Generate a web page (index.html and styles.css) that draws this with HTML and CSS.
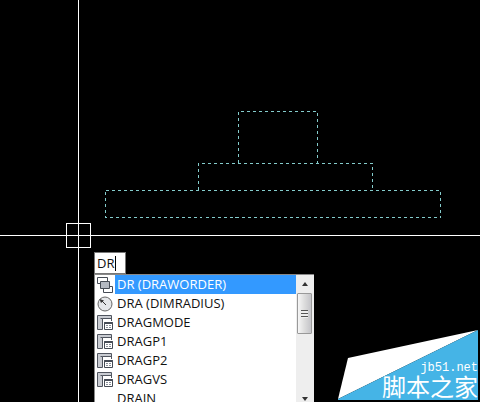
FILE: index.html
```html
<!DOCTYPE html>
<html lang="en">
<head>
<meta charset="utf-8">
<title>Drawing canvas</title>
<link rel="stylesheet" href="styles.css">
</head>
<body>
<main class="canvas">
  <svg class="drawing" aria-hidden="true">
    <g class="outline">
      <path d="M238.500 163V111.500H317.500V163"/>
      <path d="M198.500 190V163.500H372.500V190"/>
      <path d="M105.500 190.500H440.500V217.500H105.500Z"/>
    </g>
    <g class="crosshair">
      <line x1="78.500" y1="0" x2="78.500" y2="100%"/>
      <line x1="0" y1="235.500" x2="100%" y2="235.500"/>
      <rect x="66.500" y="223.500" width="24" height="24"/>
    </g>
  </svg>

  <svg class="symbols" aria-hidden="true">
    <symbol id="order" viewBox="0 0 16 16">
      <path class="sheet" d="M.5 .5h10v6h-10zM6.500 9.500h9v6h-9z"/>
      <path class="front" d="M3.500 4.500h9v7h-9z"/>
    </symbol>
    <symbol id="radius" viewBox="0 0 16 16">
      <circle class="dial" cx="8" cy="8" r="7"/>
      <path class="needle" d="M9 9L4 4"/>
      <path class="tip" d="M2.500 3l4.500 1.500-3 2.500z"/>
    </symbol>
    <symbol id="variable" viewBox="0 0 16 16">
      <path class="shade" d="M1 1h13v3H5v11H1z"/>
      <path class="frame" d="M14.500 6V.5H.5v14h5v-11h9M3.500 3.500h2"/>
      <path class="sheet" d="M7.500 7.500h8v7h-8z"/>
      <path class="front" d="M7.500 7.500h8v1h-8z"/>
      <path class="lines" d="M9 10.500h2M12 10.500h2M9 12.500h2M12 12.500h2"/>
    </symbol>
  </svg>

  <section class="prompt">
    <input class="command" type="text" value="DR" aria-label="Command" spellcheck="false">
    <span class="caret"></span>
    <div class="suggestions">
      <div class="options" role="listbox" aria-label="Commands">
        <button class="option selected" role="option" aria-selected="true"><svg class="icon"><use href="#order"/></svg><span class="name">DR (DRAWORDER)</span></button>
        <button class="option" role="option"><svg class="icon"><use href="#radius"/></svg><span class="name">DRA (DIMRADIUS)</span></button>
        <button class="option" role="option"><svg class="icon"><use href="#variable"/></svg><span class="name">DRAGMODE</span></button>
        <button class="option" role="option"><svg class="icon"><use href="#variable"/></svg><span class="name">DRAGP1</span></button>
        <button class="option" role="option"><svg class="icon"><use href="#variable"/></svg><span class="name">DRAGP2</span></button>
        <button class="option" role="option"><svg class="icon"><use href="#variable"/></svg><span class="name">DRAGVS</span></button>
        <button class="option" role="option"><span class="icon"></span><span class="name">DRAIN</span></button>
      </div>
      <div class="scrollbar">
        <button class="arrow" aria-label="Scroll up"><svg class="chevron" viewBox="0 0 6 4"><path d="M0 4L3 0l3 4z"/></svg></button>
        <div class="thumb"><span class="grip"></span></div>
        <button class="arrow end" aria-label="Scroll down"><svg class="chevron" viewBox="0 0 6 4"><path d="M0 0h6L3 4z"/></svg></button>
      </div>
    </div>
  </section>

  <aside class="watermark">
    <svg class="banner" viewBox="0 0 141 70" aria-hidden="true">
      <path class="paper" d="M10 28L140 0 0 69z"/>
      <path class="wave" d="M140 0v70H0v-1z"/>
    </svg>
    <span class="site">jb51.net</span>
    <span class="title" lang="zh">脚本之家</span>
  </aside>
</main>
</body>
</html>
```
FILE: styles.css
```css
* { box-sizing: border-box; }

body {
  margin: 0;
  background: #000;
  font-family: "Open Sans", "Noto Sans", sans-serif;
  font-size: 13px;
}

button {
  padding: 0;
  border: 0;
  background: none;
  font: inherit;
}

.canvas {
  position: relative;
  height: 100vh;
  overflow: hidden;
}

.drawing {
  position: absolute;
  width: 100%;
  height: 100%;
  fill: none;
  shape-rendering: crispEdges;
}

.outline {
  stroke: #84cccc;
  stroke-dasharray: 3 3;
}

.crosshair { stroke: #fff; }

.symbols {
  position: absolute;
  width: 0;
  height: 0;
}

.prompt {
  position: absolute;
  top: 252px;
  bottom: 0;
  left: 94px;
  display: flex;
  flex-direction: column;
  width: 220px;
}

.command {
  width: 32px;
  height: 22px;
  padding: 0 2px;
  border: 1px solid #777;
  border-radius: 0;
  outline: 0;
  background: #fff;
  color: #111;
  font: inherit;
}

.caret {
  position: absolute;
  top: 4px;
  left: 21px;
  width: 1px;
  height: 15px;
  background: #000;
}

.suggestions {
  display: flex;
  flex: 1;
  min-height: 0;
  border-top: 1px solid #888;
  border-left: 1px solid #888;
  background: #fff;
}

.options {
  flex: 1;
  overflow: hidden;
}

.option {
  display: flex;
  align-items: center;
  width: 100%;
  height: 19px;
  color: #111;
  text-align: left;
}

.icon {
  flex: none;
  width: 16px;
  height: 16px;
  margin: 0 2px;
}

.name {
  flex: 1;
  padding-left: 2px;
  line-height: 19px;
}

.selected .name {
  background: #3399ff;
  color: #fff;
}

.sheet { fill: #fff; stroke: #454b55; }
.front { fill: #b4b9c2; stroke: #454b55; }
.shade { fill: #c9ccd2; }
.frame { fill: none; stroke: #50555f; }
.lines { fill: none; stroke: #8a8f98; }
.dial { fill: #e4e6e9; stroke: #666; }
.needle { stroke: #333; }
.tip { fill: #333; }

.scrollbar {
  display: flex;
  flex-direction: column;
  width: 18px;
  padding: 0 2px 0 1px;
  background: #eee;
}

.arrow {
  display: grid;
  place-items: center;
  height: 18px;
}

.end {
  height: 6px;
  margin-top: auto;
}

.chevron {
  width: 6px;
  height: 4px;
  fill: #333;
}

.thumb {
  display: grid;
  place-items: center;
  height: 41px;
  border: 1px solid #999;
  border-radius: 1px;
  background: linear-gradient(90deg, #f6f6f6, #dcdcdc 50%, #c4c4c8);
}

.grip {
  width: 7px;
  height: 8px;
  background: repeating-linear-gradient(#555 0 1px, #eee 1px 3px);
}

.watermark {
  position: absolute;
  right: 1px;
  bottom: 2px;
  display: flex;
  flex-direction: column;
  align-items: flex-end;
  justify-content: flex-end;
  width: 141px;
  height: 70px;
  padding: 0 1px 2px 0;
  color: #fff;
}

.banner {
  position: absolute;
  inset: 0;
}

.paper { fill: #fff; }
.wave { fill: #45b4e6; }

.site {
  position: relative;
  font: 12px/12px "Liberation Mono", monospace;
}

.title {
  position: relative;
  font: 24px/24px "Noto Sans CJK SC", sans-serif;
}
```
